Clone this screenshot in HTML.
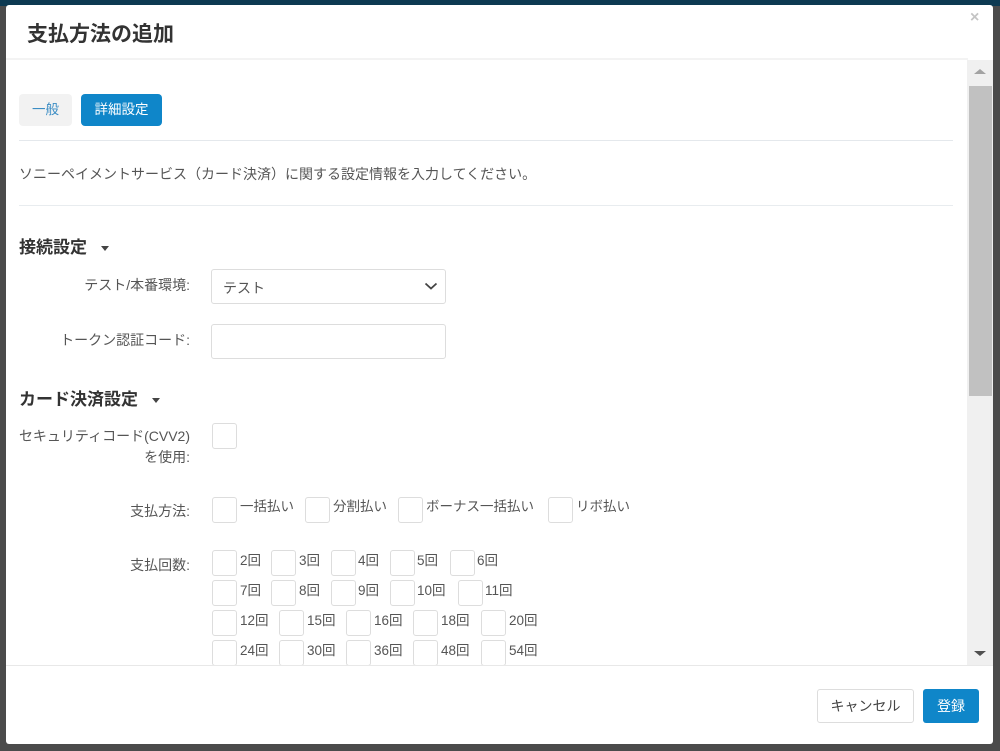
<!DOCTYPE html>
<html><head><meta charset="utf-8"><style>
*{box-sizing:border-box;margin:0;padding:0}
body{width:1000px;height:751px;background:#4b4b4b;position:relative;overflow:hidden;font-family:"Liberation Sans","Noto Sans CJK JP",sans-serif;color:#555;font-size:13px}
.a{position:absolute}
.top{left:0;top:0;width:1000px;height:6px;background:#0d3a52}
.modal{left:6px;top:5px;width:987px;height:739px;background:#fff;border-radius:3px}
.cb{position:absolute;width:25px;height:26px;border:1px solid #ddd;border-radius:3px;background:#fff}
.t{position:absolute;font-size:13.5px;color:#555;white-space:nowrap}
.lbl{position:absolute;font-size:14px;color:#555;text-align:right;white-space:nowrap}
.h{position:absolute;font-size:17px;font-weight:bold;color:#333}
.caret{display:inline-block;width:0;height:0;border-left:4px solid transparent;border-right:4px solid transparent;border-top:5px solid #444;margin-left:14px;vertical-align:middle}
.inp{position:absolute;left:211px;width:235px;height:35px;border:1px solid #ddd;border-radius:3px;background:#fff}
</style></head><body>
<div class="a top"></div>
<div class="a modal"></div>
<div class="a" style="left:27px;top:18px;font-size:21px;font-weight:bold;color:#333">支払方法の追加</div>
<div class="a" style="left:970px;top:9px;font-size:16px;color:#c4c4c4;font-weight:bold">×</div>
<div class="a" style="left:6px;top:58px;width:962px;height:2px;background:#f3f3f3"></div>
<div class="a" style="left:19px;top:94px;width:53px;height:32px;background:#f2f2f2;border-radius:4px;color:#3b8dc4;font-size:13.5px;line-height:32px;text-align:center">一般</div>
<div class="a" style="left:81px;top:94px;width:81px;height:32px;background:#0f86c9;border-radius:4px;color:#fff;font-size:13.5px;line-height:32px;text-align:center">詳細設定</div>
<div class="a" style="left:19px;top:140px;width:934px;height:1px;background:#e4e8ec"></div>
<div class="t" style="left:19px;top:164px;font-size:14px">ソニーペイメントサービス（カード決済）に関する設定情報を入力してください。</div>
<div class="a" style="left:19px;top:205px;width:934px;height:1px;background:#e8ecef"></div>
<div class="h" style="left:19px;top:233px">接続設定<span class="caret"></span></div>
<div class="lbl" style="right:810px;top:275px">テスト/本番環境:</div>
<div class="inp" style="top:269px"><span style="position:absolute;left:11px;top:8px;font-size:14px;color:#555">テスト</span>
<svg style="position:absolute;right:7px;top:11px" width="14" height="10" viewBox="0 0 14 10"><path d="M1.5 2.5 L7 7.5 L12.5 2.5" stroke="#444" stroke-width="1.8" fill="none"/></svg></div>
<div class="lbl" style="right:810px;top:330px">トークン認証コード:</div>
<div class="inp" style="top:324px"></div>
<div class="h" style="left:19px;top:385px">カード決済設定<span class="caret"></span></div>
<div class="lbl" style="right:810px;top:426px;line-height:21px">セキュリティコード(CVV2)<br>を使用:</div>
<div class="cb" style="left:212px;top:423px"></div>
<div class="lbl" style="right:810px;top:501px">支払方法:</div>
<div class="cb" style="left:212px;top:497px"></div><div class="t" style="left:240px;top:495px">一括払い</div>
<div class="cb" style="left:305px;top:497px"></div><div class="t" style="left:333px;top:495px">分割払い</div>
<div class="cb" style="left:398px;top:497px"></div><div class="t" style="left:426px;top:495px">ボーナス一括払い</div>
<div class="cb" style="left:548px;top:497px"></div><div class="t" style="left:576px;top:495px">リボ払い</div>
<div class="lbl" style="right:810px;top:555px">支払回数:</div>
<div class="cb" style="left:212px;top:550px"></div><div class="t" style="left:240px;top:549px">2回</div>
<div class="cb" style="left:271px;top:550px"></div><div class="t" style="left:299px;top:549px">3回</div>
<div class="cb" style="left:331px;top:550px"></div><div class="t" style="left:358px;top:549px">4回</div>
<div class="cb" style="left:390px;top:550px"></div><div class="t" style="left:417px;top:549px">5回</div>
<div class="cb" style="left:450px;top:550px"></div><div class="t" style="left:477px;top:549px">6回</div>
<div class="cb" style="left:212px;top:580px"></div><div class="t" style="left:240px;top:579px">7回</div>
<div class="cb" style="left:271px;top:580px"></div><div class="t" style="left:299px;top:579px">8回</div>
<div class="cb" style="left:331px;top:580px"></div><div class="t" style="left:358px;top:579px">9回</div>
<div class="cb" style="left:390px;top:580px"></div><div class="t" style="left:417px;top:579px">10回</div>
<div class="cb" style="left:458px;top:580px"></div><div class="t" style="left:485px;top:579px">11回</div>
<div class="cb" style="left:212px;top:610px"></div><div class="t" style="left:240px;top:609px">12回</div>
<div class="cb" style="left:279px;top:610px"></div><div class="t" style="left:307px;top:609px">15回</div>
<div class="cb" style="left:346px;top:610px"></div><div class="t" style="left:374px;top:609px">16回</div>
<div class="cb" style="left:413px;top:610px"></div><div class="t" style="left:441px;top:609px">18回</div>
<div class="cb" style="left:481px;top:610px"></div><div class="t" style="left:509px;top:609px">20回</div>
<div class="cb" style="left:212px;top:640px"></div><div class="t" style="left:240px;top:639px">24回</div>
<div class="cb" style="left:279px;top:640px"></div><div class="t" style="left:307px;top:639px">30回</div>
<div class="cb" style="left:346px;top:640px"></div><div class="t" style="left:374px;top:639px">36回</div>
<div class="cb" style="left:413px;top:640px"></div><div class="t" style="left:441px;top:639px">48回</div>
<div class="cb" style="left:481px;top:640px"></div><div class="t" style="left:509px;top:639px">54回</div>
<div class="a" style="left:967px;top:60px;width:26px;height:606px;background:#f0f0f0"></div>
<div class="a" style="left:969px;top:86px;width:23px;height:310px;background:#c1c1c1"></div>
<div class="a" style="left:974px;top:69px;width:0;height:0;border-left:6px solid transparent;border-right:6px solid transparent;border-bottom:5px solid #a3a3a3"></div>
<div class="a" style="left:974px;top:651px;width:0;height:0;border-left:6px solid transparent;border-right:6px solid transparent;border-top:5px solid #505050"></div>
<div class="a" style="left:6px;top:665px;width:987px;height:1px;background:#e8e8e8"></div>
<div class="a" style="left:817px;top:689px;width:97px;height:34px;border:1px solid #ddd;border-radius:3px;background:#fff;color:#444;font-size:14px;line-height:32px;text-align:center">キャンセル</div>
<div class="a" style="left:923px;top:689px;width:56px;height:34px;background:#0f86c9;border-radius:3px;color:#fff;font-size:14px;line-height:34px;text-align:center">登録</div>
</body></html>
